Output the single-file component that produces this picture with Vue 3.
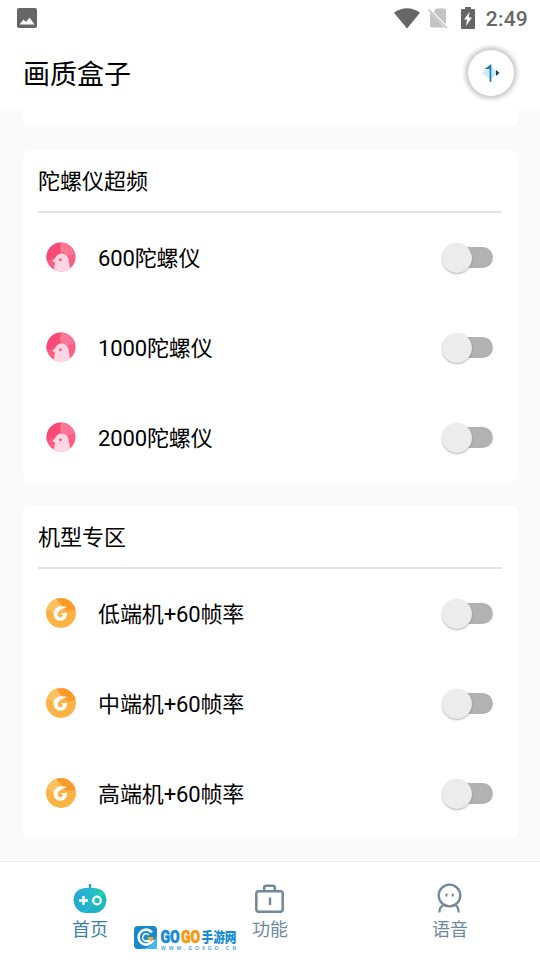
<template>
  <div class="screen">
    <div class="status-bar">
      <svg class="picture" width="20" height="20" viewBox="0 0 20 20">
        <rect width="20" height="20" rx="2" fill="#666" />
        <path d="M2.500 16.500 L6.500 11.500 L9 14 L12.500 9.500 L17.500 16.500 Z" fill="#fff" />
      </svg>
      <div class="status-right">
        <svg width="26" height="21" viewBox="0 0 26 21">
          <path d="M0 4.800 C7.500 -1.200 18.500 -1.200 26 4.800 L13 20.500 Z" fill="#666" />
        </svg>
        <svg class="sim" width="20" height="21" viewBox="0 0 20 21">
          <path d="M8 0.500 H16 Q18 .5 18 2.500 V16.500 L5.500 4 Z" fill="#c4c4c4" />
          <path d="M2 4.500 L16.500 19.500 H4 Q2 19.500 2 17.500 Z" fill="#c4c4c4" />
          <path d="M0.500 1.500 L18.800 20" stroke="#c4c4c4" stroke-width="1.600" />
        </svg>
        <svg class="battery" width="14" height="22" viewBox="0 0 14 22">
          <path d="M4 0 H10 V2 H13 Q14 2 14 3 V21 Q14 22 13 22 H1 Q0 22 0 21 V3 Q0 2 1 2 H4 Z" fill="#666" />
          <path d="M8.500 5 L3 12.500 H6 L5 19 L11 10.500 H7.800 Z" fill="#fff" />
        </svg>
        <span class="clock">2:49</span>
      </div>
    </div>

    <header class="header">
      <h1 class="title">画质盒子</h1>
      <div class="avatar">
        <svg width="18" height="20" viewBox="0 0 18 20">
          <path d="M8.500 2 L16 10 L8.500 17 L0 10 Z" fill="#c9edfb" />
          <path d="M9.300 1 V19 H7.600 V6 H2.500 Z" fill="#2879a8" />
          <path d="M14 7 L17.500 10 L14 13 Z" fill="#174163" />
        </svg>
      </div>
    </header>

    <main class="content">
      <div class="card-end"></div>
      <section v-for="group in groups" :key="group.title" class="card">
        <h2 class="card-title">{{ group.title }}</h2>
        <div v-for="item in group.items" :key="item.label" class="row" @click="item.on = !item.on">
          <svg v-if="group.icon === 'bird'" class="row-icon" viewBox="0 0 30 30">
            <circle cx="15" cy="15" r="14.500" fill="#fb5d83" />
            <path d="M2.500 8 A14.500 14.500 0 0 1 15 .5 L19 7 L11 14 L1 19 A14 14 0 0 1 2.500 8 Z" fill="#f84a76" />
            <path d="M15 .5 A14.500 14.500 0 0 1 29 11 L21 14 L14 9 Z" fill="#fc7696" />
            <path d="M8 27.500 L9 20 Q6 20 6.500 18.500 Q8 17.500 9 16.500 Q11 11.500 15.500 11.500 Q20.500 11.500 22.500 17 L24 26.500 A14.500 14.500 0 0 1 8 27.500 Z" fill="#ffd6e2" />
            <circle cx="14.500" cy="17.800" r="1.400" fill="#f6517d" />
          </svg>
          <svg v-else class="row-icon" viewBox="0 0 30 30">
            <circle cx="15" cy="15" r="15" fill="#fcb345" />
            <path d="M10 1 A15 15 0 0 1 29.500 12 L21 13 Z" fill="#f99a2a" />
            <path d="M1 10 A15 15 0 0 1 10 1 L15 8 L8 15 Z" fill="#fdc260" />
            <path d="M21.500 9 Q17.500 7.800 14 8.300 Q8 9.500 7.500 15.500 Q8 22.500 14.500 22.700 Q21 22.500 21 14.800 L14.500 15.300 L17 17.300 Q16 19.800 13.800 19.300 Q10.500 18.300 12 14.500 Q14.500 10.800 21.500 9 Z" fill="#fff" />
          </svg>
          <span class="label">{{ item.label }}</span>
          <div class="switch" :class="{ on: item.on }">
            <div class="thumb"></div>
          </div>
        </div>
      </section>
    </main>

    <nav class="tabs">
      <div class="tab active">
        <svg width="34" height="32" viewBox="0 0 34 32">
          <defs>
            <linearGradient id="pad" x1="0" y1="0" x2="1" y2="0">
              <stop offset="0" stop-color="#25a9d5" />
              <stop offset=".5" stop-color="#22b9cb" />
              <stop offset="1" stop-color="#24d5a2" />
            </linearGradient>
          </defs>
          <path d="M17 1 V7" stroke="#2e9db5" stroke-width="2.400" />
          <path d="M12 5 H22 Q33 6 33.500 17.500 Q32 29 22 30 H12 Q2 29 .5 17.500 Q1 6 12 5 Z" fill="url(#pad)" />
          <path d="M14 30 L31 11 Q33 13 33.500 17.500 Q32 29 22 30 Z" fill="#158ed0" opacity=".3" />
          <path d="M6 17.500 H15 M10.500 13 V22" stroke="#fff" stroke-width="2.400" />
          <circle cx="24" cy="17.500" r="3.800" fill="none" stroke="#fff" stroke-width="2.200" />
        </svg>
        <span>首页</span>
      </div>
      <div class="tab">
        <svg width="34" height="32" viewBox="0 0 34 32" fill="none" stroke="#71899b" stroke-width="2.500">
          <rect x="3.300" y="8.200" width="26.400" height="20.500" rx="2.500" />
          <path d="M11.200 8 V4.500 Q11.200 2.800 13 2.800 H20 Q21.800 2.800 21.800 4.500 V8" />
          <path d="M17 14.500 V22" />
        </svg>
        <span>功能</span>
      </div>
      <div class="tab">
        <svg width="34" height="32" viewBox="0 0 34 32" fill="none" stroke="#71899b" stroke-width="2.300">
          <circle cx="16.500" cy="12.500" r="10.800" />
          <path d="M11 22 Q6.500 23.500 6.300 29.500 M22 22 Q25.500 23.500 25.700 29.500" />
          <path d="M13.500 10.500 V13.500 M19.800 10.500 V13.500" stroke-width="2" />
        </svg>
        <span>语音</span>
      </div>
      <svg class="badge" width="106" height="28" viewBox="0 0 106 28">
        <path d="M5 1 H20 Q24 1 24 5 V24 H5 Q1 24 1 20 V5 Q1 1 5 1 Z" fill="#1689cf" />
        <path d="M24 10 V24 H7 Q20 23 24 10 Z" fill="#45b9ec" />
        <path d="M19 7.500 A7.500 7.500 0 1 0 19.500 16 H13" fill="none" stroke="#fff" stroke-width="2.600" />
        <path d="M16 10 A3.700 3.700 0 1 0 16 15" fill="none" stroke="#fff" stroke-width="1.500" />
        <path d="M14 12 H21 L18 17 Z" fill="#f9a51c" />
        <g class="brand">
          <text x="27.500" y="18" textLength="19.300" lengthAdjust="spacingAndGlyphs" fill="#168bd2" stroke="#168bd2">GO</text>
          <text x="48" y="18" textLength="19.300" lengthAdjust="spacingAndGlyphs" fill="#f7990f" stroke="#f7990f">GO</text>
        </g>
        <text class="brand-cn" transform="translate(68.500 17) scale(1 1.150)" textLength="35" lengthAdjust="spacingAndGlyphs">手游网</text>
        <text class="site" x="28" y="25" textLength="75">WWW.GO9GO.CN</text>
      </svg>
    </nav>
  </div>
</template>

<script setup>
import { ref } from 'vue';

const makeItems = (labels) => labels.map((label) => ({ label, on: false }));

const groups = ref([
  {
    title: '陀螺仪超频',
    icon: 'bird',
    items: makeItems(['600陀螺仪', '1000陀螺仪', '2000陀螺仪']),
  },
  {
    title: '机型专区',
    icon: 'coin',
    items: makeItems(['低端机+60帧率', '中端机+60帧率', '高端机+60帧率']),
  },
]);
</script>

<style>
body {
  margin: 0;
}
</style>

<style scoped>
.screen {
  width: 540px;
  height: 960px;
  display: flex;
  flex-direction: column;
  overflow: hidden;
  background-color: #fafafa;
  color: #000;
  font-family: Roboto, "Noto Sans CJK SC", sans-serif;
}

.screen svg {
  display: block;
  flex-shrink: 0;
}

.status-bar {
  height: 36px;
  display: flex;
  justify-content: space-between;
  align-items: center;
  padding: 0 12px 0 17px;
  box-sizing: border-box;
  background-color: #fff;
}

.status-right {
  display: flex;
  align-items: center;
  height: 34px;
}

.sim {
  margin-left: 8px;
}

.battery {
  margin-left: 13px;
}

.clock {
  margin-left: 11px;
  font-size: 21px;
  font-weight: 500;
  line-height: 34px;
  letter-spacing: 0.2px;
  color: #666;
  padding-top: 2px;
}

.header {
  height: 75px;
  display: flex;
  justify-content: space-between;
  align-items: center;
  padding: 0 26px 1px 23px;
  box-sizing: border-box;
  background-color: #fff;
}

.title {
  margin: 0;
  padding-top: 3px;
  font-size: 27px;
  font-weight: 400;
  line-height: 40px;
}

.avatar {
  width: 46px;
  height: 46px;
  display: flex;
  align-items: center;
  justify-content: center;
  border-radius: 50%;
  background-color: #fff;
  box-shadow: 0 0 4px 3px #c9c9c9;
}

.content {
  height: 750px;
  padding: 0 23px;
}

.card-end {
  height: 16px;
  margin-bottom: 23px;
  border-radius: 0 0 8px 8px;
  background-color: #fff;
}

.card {
  height: 333px;
  margin-bottom: 23px;
  border-radius: 8px;
  background-color: #fff;
}

.card-title {
  height: 61px;
  margin: 0 15px;
  border-bottom: 2px solid #e3e3e3;
  font-size: 22px;
  font-weight: 400;
  line-height: 63px;
}

.row {
  height: 90px;
  display: flex;
  align-items: center;
  padding: 0 24px 0 22px;
  box-sizing: border-box;
  cursor: pointer;
}

.row-icon {
  width: 30px;
  height: 30px;
  margin: 0 0.5px 2px;
}

.label {
  flex: 1;
  margin-left: 22px;
  padding-top: 2px;
  font-size: 22px;
  line-height: 30px;
  letter-spacing: -0.12px;
}

.switch {
  width: 51px;
  height: 21px;
  display: flex;
  align-items: center;
  margin-bottom: 1px;
  border-radius: 11px;
  background: linear-gradient(#b2b2b2, #b2b2b2) right center / 41px 21px no-repeat;
}

.thumb {
  width: 30px;
  height: 30px;
  flex-shrink: 0;
  border-radius: 50%;
  background-color: #ececec;
  box-shadow: 0 1px 2px rgba(0, 0, 0, 0.3);
}

.switch.on .thumb {
  margin-left: 21px;
}

.tabs {
  position: relative;
  height: 99px;
  display: flex;
  box-sizing: border-box;
  border-top: 1px solid #e9e9e9;
  background-color: #fff;
}

.tab {
  flex: 1;
  display: flex;
  flex-direction: column;
  align-items: center;
  padding-top: 21px;
  color: #71899b;
  font-size: 18px;
  line-height: 30px;
}

.tab.active {
  color: #397fa8;
}

/* site badge over the tab bar */
.badge {
  position: absolute;
  left: 133px;
  top: 63px;
}

.brand {
  font-family: Roboto, sans-serif;
  font-size: 18.5px;
  font-weight: 900;
  stroke-width: 0.6px;
}

.brand-cn {
  font-family: "Noto Sans CJK SC", sans-serif;
  font-size: 12px;
  font-weight: 900;
  fill: #168bd2;
}

.site {
  font-family: "Liberation Sans", sans-serif;
  font-size: 5px;
  font-weight: 700;
  fill: #4aa6dc;
}
</style>
